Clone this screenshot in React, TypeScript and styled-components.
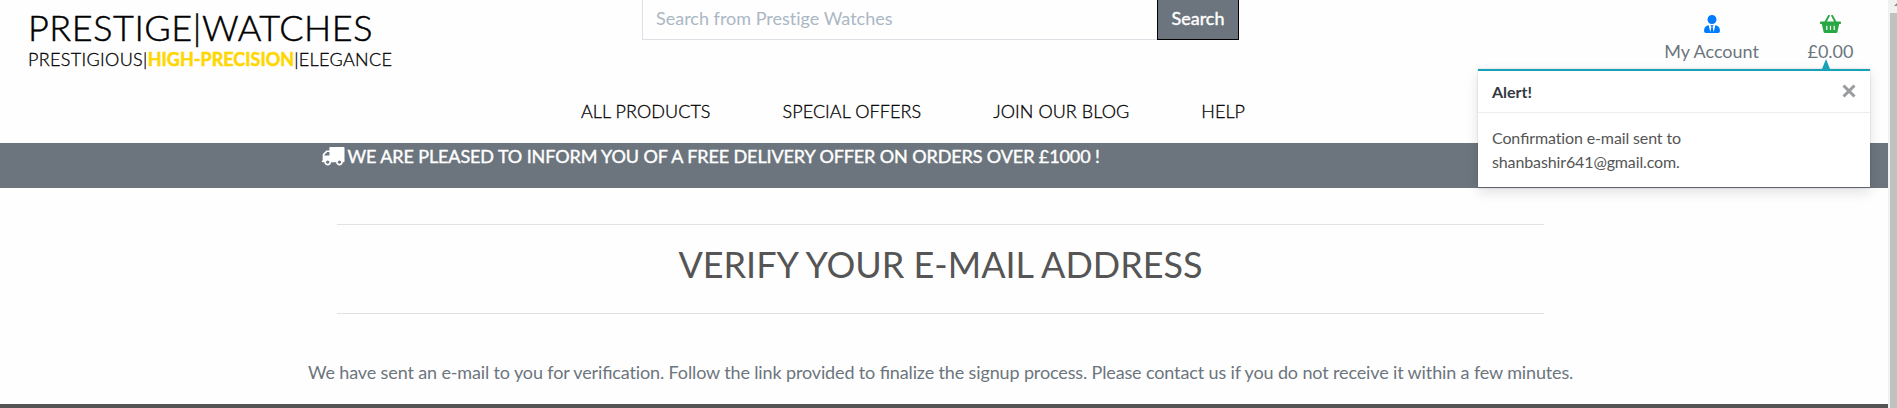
import React from 'react';
import styled, { createGlobalStyle } from 'styled-components';
import { FaUserTie } from 'react-icons/fa';

const GlobalStyle = createGlobalStyle`
  * { box-sizing: border-box; }
  html, body { margin: 0; height: 100%; overflow: hidden; }
  body {
    background: #fefefe;
    font-family: Lato, "Liberation Sans", sans-serif;
    font-variant-ligatures: none;
    color: #555;
    font-size: 18px;
    line-height: 1.5;
  }
`;

const Window = styled.div`
  display: grid;
  grid-template-columns: 1888px 9px;
  height: 408px;
  overflow: hidden;
`;
const Page = styled.div`
  position: relative;
  display: flex;
  flex-direction: column;
  height: 408px;
`;
const ScrollTrack = styled.div`
  background: #f1f1f1;
  padding: 0 0 0 2px;
  overflow: hidden;
`;
const ScrollArrow = styled.div`
  height: 13px;
  padding: 2px 0 0 4px;
  svg { display: block; }
`;
const ScrollThumb = styled.div`
  height: 395px;
  background: #c1c1c1;
`;
const Header = styled.header`
  display: grid;
  grid-template-columns: 638px 597px 1fr;
  column-gap: 4px;
  height: 76px;
`;
const Brand = styled.a`
  padding: 0 0 0 28px;
  color: #000;
  white-space: nowrap;
  font-weight: 300;
  -webkit-text-stroke: 0.3px #000;
`;
const BrandName = styled.div`
  font-size: 36px;
  line-height: 54px;
  height: 46px;
  letter-spacing: 0.55px;
  -webkit-text-stroke-width: 0.5px;
`;
const BrandTag = styled.div`
  font-size: 18px;
  line-height: 27px;
  letter-spacing: 0.33px;
`;
const Highlight = styled.strong`
  color: #ffd700;
  font-weight: 700;
  letter-spacing: 0;
  -webkit-text-stroke: 0.5px #ffd700;
`;
const SearchForm = styled.form`
  display: flex;
  height: 40px;
`;
const SearchInput = styled.input`
  flex: 1;
  min-width: 0;
  border: 1px solid #dcdfe3;
  border-width: 0 0 1px 1px;
  background: #fefefe;
  padding: 0 13px 3px;
  font: inherit;
  &::placeholder { color: #aab7c4; opacity: 1; }
`;
const SearchButton = styled.button`
  width: 82px;
  border: 1px solid #000;
  border-top: 0;
  background: #6c757d;
  color: #fff;
  font: inherit;
  -webkit-text-stroke: 0.4px #fff;
  padding: 0 0 3px;
`;
const Actions = styled.div`
  display: flex;
  justify-content: flex-end;
  gap: 48.5px;
  padding: 15px 34.5px 0 0;
`;
const Action = styled.a<{ $icon: string }>`
  display: flex;
  flex-direction: column;
  align-items: center;
  color: #6c757d;
  svg { color: ${(p) => p.$icon}; height: 18px; display: block; margin-bottom: 5px; }
`;
const Nav = styled.nav`
  display: flex;
  gap: 72px;
  height: 67px;
  padding: 22px 0 0 581px;
  color: #000;
  white-space: nowrap;
  font-weight: 300;
  letter-spacing: 0.06px;
  -webkit-text-stroke: 0.3px #000;
`;
const Banner = styled.section`
  display: flex;
  align-items: flex-start;
  gap: 3px;
  height: 45px;
  padding: 0 0 0 321px;
  background: #6c757d;
  color: #fff;
  white-space: nowrap;
  letter-spacing: -0.11px;
  -webkit-text-stroke: 0.4px #fff;
  svg { margin-top: 4px; }
`;
const TitleBlock = styled.section`
  margin: 36px 344px 0 337px;
  height: 90px;
  border: 1px solid #e2e2e2;
  border-width: 1px 0;
  text-align: center;
`;
const Title = styled.h2`
  margin: 17px 0 0;
  font-weight: 400;
  font-size: 36px;
  line-height: 44px;
  color: #555;
`;
const Message = styled.p`
  margin: 45px 0 0;
  padding-left: 308px;
  line-height: 27px;
  color: #6c757d;
  white-space: nowrap;
  letter-spacing: -0.135px;
`;
const Ligature = styled.span`
  font-feature-settings: "liga" 1;
`;
const Footer = styled.footer`
  margin-top: auto;
  height: 4px;
  background: #555;
`;
const Toast = styled.aside`
  position: absolute;
  left: 1478px;
  top: 69px;
  width: 392px;
  height: 119px;
  border-top: 2px solid #17a2b8;
  border-bottom: 1px solid #60656d;
  background: #fff;
  box-shadow: 0 4px 12px rgba(0,0,0,.12), 0 0 1px rgba(0,0,0,.3);
`;
const Pointer = styled.span`
  position: absolute;
  left: 344px;
  top: -12px;
  border: solid transparent;
  border-width: 0 4px 10px;
  border-bottom-color: #17a2b8;
`;
const ToastHead = styled.div`
  display: flex;
  justify-content: space-between;
  height: 42px;
  padding: 9px 14px 0;
  border-bottom: 1px solid #eee;
  font-size: 16px;
  line-height: 24px;
  color: #343a40;
`;
const Close = styled.svg`
  margin-top: 4px;
`;
const ToastBody = styled.div`
  padding: 13px 14px;
  font-size: 16px;
  line-height: 24px;
  letter-spacing: -0.125px;
  color: #555;
`;

function Basket() {
  return (
    <svg width="21" height="18" viewBox="0 0 21 18">
      <path d="M8.8.9 5 8M12.2.9 16 8" stroke="currentColor" strokeWidth="2" strokeLinecap="round" />
      <path
        fill="currentColor"
        fillRule="evenodd"
        d="M.7 6.5h19.6q.7 0 .7.7v1.100q0 .7-.7.7h-1.100l-1.800 7.900q-.2 1.100-1.300 1.100H4.900q-1.100 0-1.300-1.100l-1.800-7.900H.7q-.7 0-.7-.7v-1.100q0-.7.7-.7zM6.200 10.800v4.200h1.200v-4.200zM9.900 10.800v4.200h1.200v-4.200zM13.600 10.800v4.200h1.200v-4.200z"
      />
    </svg>
  );
}

function Truck() {
  return (
    <svg width="23.5" height="18.5" viewBox="0 256 1792 1408" fill="#fff" stroke="none">
      <path d="M640 1408q0-52-38-90t-90-38-90 38-38 90 38 90 90 38 90-38 38-90zm-384-512h384v-256h-158q-13 0-22 9l-195 195q-9 9-9 22v30zm1280 512q0-52-38-90t-90-38-90 38-38 90 38 90 90 38 90-38 38-90zm256-1088v1024q0 15-4 26.5t-13.5 18.5-16.5 11.5-23.5 6-22.5 2-25.5 0-22.5-.5q0 106-75 181t-181 75-181-75-75-181h-384q0 106-75 181t-181 75-181-75-75-181h-64q-3 0-22.5.5t-25.5 0-22.5-2-23.5-6-16.5-11.5-13.5-18.5-4-26.5q0-26 19-45t45-19v-320q0-8-.5-35t0-38 2.5-34.5 6.5-37 14-30.5 22.5-30l198-198q19-19 50.5-32t58.5-13h160v-192q0-26 19-45t45-19h1024q26 0 45 19t19 45z" />
    </svg>
  );
}

export default function App() {
  return (
    <>
      <GlobalStyle />
      <Window>
        <Page>
          <Header>
            <Brand>
              <BrandName>PRESTIGE|WATCHES</BrandName>
              <BrandTag>PRESTIGIOUS|<Highlight>HIGH-PRECISION</Highlight>|ELEGANCE</BrandTag>
            </Brand>
            <SearchForm>
              <SearchInput placeholder="Search from Prestige Watches" />
              <SearchButton type="button">Search</SearchButton>
            </SearchForm>
            <Actions>
              <Action $icon="#007bff"><FaUserTie />My Account</Action>
              <Action $icon="#28a745"><Basket />£0.00</Action>
            </Actions>
          </Header>
          <Nav>
            <span>ALL PRODUCTS</span>
            <span>SPECIAL OFFERS</span>
            <span>JOIN OUR BLOG</span>
            <span>HELP</span>
          </Nav>
          <Banner>
            <Truck />
            <span>WE ARE PLEASED TO INFORM YOU OF A FREE DELIVERY OFFER ON ORDERS OVER £1000 !</span>
          </Banner>
          <TitleBlock>
            <Title>VERIFY YOUR E-MAIL ADDRESS</Title>
          </TitleBlock>
          <Message>We have sent an e-mail to you for veri<Ligature>fi</Ligature>cation. Follow the link provided to <Ligature>fi</Ligature>nalize the signup process. Please contact us if you do not receive it within a few minutes.</Message>
          <Footer />
          <Toast>
            <Pointer />
            <ToastHead>
              <strong>Alert!</strong>
              <Close width="14" height="14" viewBox="0 0 14 14" stroke="#999c9f" strokeWidth="3">
                <path d="M1.5 1.5 12.5 12.5M12.5 1.5 1.5 12.5" />
              </Close>
            </ToastHead>
            <ToastBody>Con<Ligature>fi</Ligature>rmation e-mail sent to<br />shanbashir641@gmail.com.</ToastBody>
          </Toast>
        </Page>
        <ScrollTrack>
          <ScrollArrow><svg width="7" height="4"><path d="M0 4 4 0 8 4Z" fill="#8a8a8a" /></svg></ScrollArrow>
          <ScrollThumb />
        </ScrollTrack>
      </Window>
    </>
  );
}
